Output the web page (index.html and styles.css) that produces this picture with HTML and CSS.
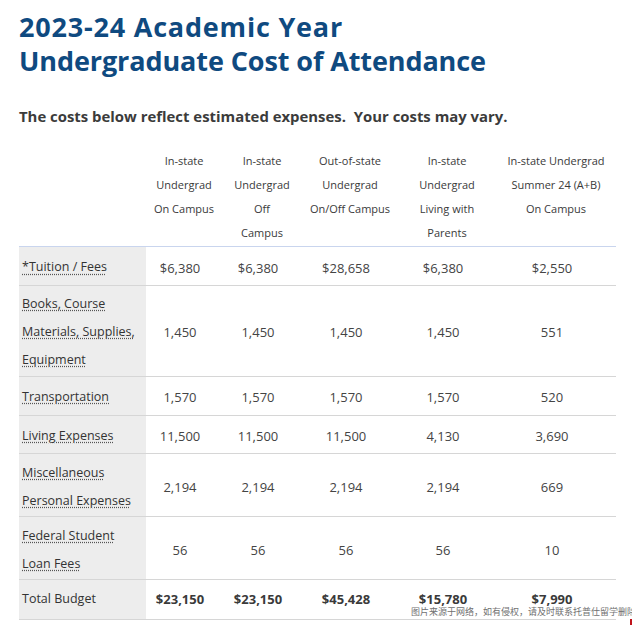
FILE: index.html
```html
<!DOCTYPE html>
<html lang="en">
<head>
<meta charset="utf-8">
<title>Cost of Attendance</title>
<link rel="stylesheet" href="styles.css">
</head>
<body>
<main class="page">
  <h1 class="title"><span class="title-line1">2023-24 Academic Year</span><br>Undergraduate Cost of Attendance</h1>
  <p class="intro">The costs below reflect estimated expenses.&nbsp; Your costs may vary.</p>
  <table class="costs">
    <colgroup>
      <col class="c0"><col class="c1"><col class="c2"><col class="c3"><col class="c4"><col class="c5">
    </colgroup>
    <thead>
      <tr>
        <th class="blank"></th>
        <th>In-state<br>Undergrad<br>On Campus</th>
        <th>In-state<br>Undergrad<br>Off<br>Campus</th>
        <th>Out-of-state<br>Undergrad<br>On/Off Campus</th>
        <th>In-state<br>Undergrad<br>Living with<br>Parents</th>
        <th>In-state Undergrad<br>Summer 24 (A+B)<br>On Campus</th>
      </tr>
    </thead>
    <tbody>
      <tr>
        <th class="label"><abbr>*Tuition / Fees</abbr></th>
        <td>$6,380</td><td>$6,380</td><td>$28,658</td><td>$6,380</td><td>$2,550</td>
      </tr>
      <tr>
        <th class="label"><abbr>Books, Course<br>Materials, Supplies,<br>Equipment</abbr></th>
        <td>1,450</td><td>1,450</td><td>1,450</td><td>1,450</td><td>551</td>
      </tr>
      <tr>
        <th class="label"><abbr>Transportation</abbr></th>
        <td>1,570</td><td>1,570</td><td>1,570</td><td>1,570</td><td>520</td>
      </tr>
      <tr>
        <th class="label"><abbr>Living Expenses</abbr></th>
        <td>11,500</td><td>11,500</td><td>11,500</td><td>4,130</td><td>3,690</td>
      </tr>
      <tr>
        <th class="label"><abbr>Miscellaneous<br>Personal Expenses</abbr></th>
        <td>2,194</td><td>2,194</td><td>2,194</td><td>2,194</td><td>669</td>
      </tr>
      <tr>
        <th class="label"><abbr>Federal Student<br>Loan Fees</abbr></th>
        <td>56</td><td>56</td><td>56</td><td>56</td><td>10</td>
      </tr>
      <tr class="total">
        <th class="label">Total Budget</th>
        <td>$23,150</td><td>$23,150</td><td>$45,428</td><td>$15,780</td><td>$7,990</td>
      </tr>
    </tbody>
  </table>
</main>
<div class="watermark">图片来源于网络，如有侵权，请及时联系托普仕留学删除</div>
<div class="corner-mark"></div>
</body>
</html>
```

FILE: styles.css
```css
html, body {
  margin: 0;
  padding: 0;
  background: #ffffff;
}

body {
  font-family: "Open Sans", "Liberation Sans", sans-serif;
  color: #3a3a3a;
  position: relative;
  width: 632px;
  height: 625px;
  overflow: hidden;
}

.page {
  padding: 10px 16px 0 19px;
}

.title {
  margin: 0;
  font-size: 27px;
  line-height: 34px;
  font-weight: 700;
  color: #0f4a80;
  letter-spacing: -0.1px;
}

.title-line1 {
  letter-spacing: 0.8px;
}

.intro {
  margin: 28px 0 0 0;
  font-size: 14.9px;
  line-height: 20px;
  font-weight: 700;
  color: #3b3b3b;
}

.costs {
  margin-top: 23px;
  width: 597px;
  border-collapse: collapse;
  table-layout: fixed;
}

.c0 { width: 127px; }
.c1 { width: 76px; }
.c2 { width: 80px; }
.c3 { width: 96px; }
.c4 { width: 98px; }
.c5 { width: 120px; }

thead th {
  font-weight: 400;
  font-size: 11px;
  line-height: 24px;
  color: #3a3a3a;
  text-align: center;
  vertical-align: top;
  padding: 0 0 1px 0;
  border-bottom: 1px solid #c9d5ee;
}

tbody tr {
  border-bottom: 1px solid #d6d6d6;
}

.label {
  background: #ededed;
  text-align: left;
  font-weight: 400;
  font-size: 12.5px;
  line-height: 28px;
  color: #333333;
  padding: 4.5px 3px 1.5px 3px;
  vertical-align: middle;
}

abbr {
  text-decoration: underline dotted #555;
  text-underline-offset: 2px;
}

tbody td {
  font-size: 13px;
  line-height: 28px;
  color: #444444;
  text-align: center;
  padding: 6.5px 8px 3.25px 0;
  vertical-align: middle;
}

.total td {
  font-weight: 700;
  color: #3a3a3a;
  padding-top: 5px;
  padding-bottom: 6px;
}

.total .label {
  padding-top: 5px;
  padding-bottom: 6px;
}

.watermark {
  position: absolute;
  left: 411px;
  top: 606px;
  white-space: nowrap;
  font-family: "Noto Sans CJK SC", sans-serif;
  font-size: 9px;
  line-height: 12px;
  color: #707070;
}

.corner-mark {
  position: absolute;
  left: 630px;
  top: 619px;
  width: 2px;
  height: 6px;
  background: #c0141c;
}
```
